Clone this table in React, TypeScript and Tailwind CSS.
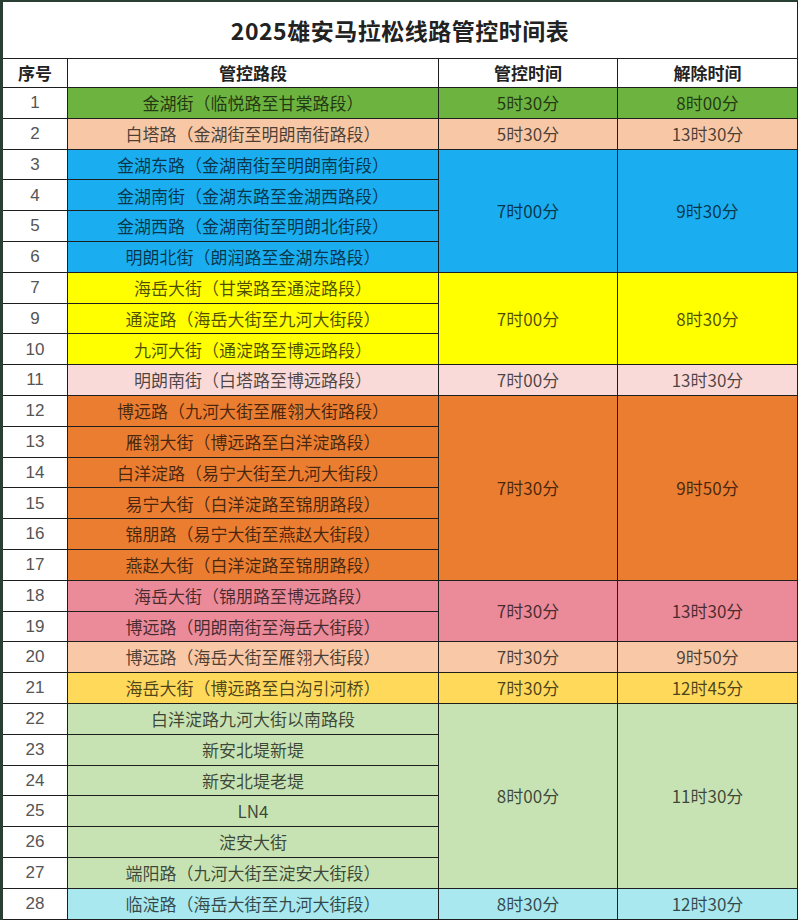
import React from 'react';

type Group = {
  bg: string;
  start: string;
  end: string;
  rows: { no: string; road: string }[];
};

const groups: Group[] = [
  { bg: 'bg-[#6db33f]', start: '5时30分', end: '8时00分', rows: [{ no: '1', road: '金湖街（临悦路至甘棠路段）' }] },
  { bg: 'bg-[#f8c8a6]', start: '5时30分', end: '13时30分', rows: [{ no: '2', road: '白塔路（金湖街至明朗南街路段）' }] },
  {
    bg: 'bg-[#1aaef0]',
    start: '7时00分',
    end: '9时30分',
    rows: [
      { no: '3', road: '金湖东路（金湖南街至明朗南街段）' },
      { no: '4', road: '金湖南街（金湖东路至金湖西路段）' },
      { no: '5', road: '金湖西路（金湖南街至明朗北街段）' },
      { no: '6', road: '明朗北街（朗润路至金湖东路段）' },
    ],
  },
  {
    bg: 'bg-[#ffff00]',
    start: '7时00分',
    end: '8时30分',
    rows: [
      { no: '7', road: '海岳大街（甘棠路至通淀路段）' },
      { no: '9', road: '通淀路（海岳大街至九河大街段）' },
      { no: '10', road: '九河大街（通淀路至博远路段）' },
    ],
  },
  { bg: 'bg-[#f9dad8]', start: '7时00分', end: '13时30分', rows: [{ no: '11', road: '明朗南街（白塔路至博远路段）' }] },
  {
    bg: 'bg-[#eb7d31]',
    start: '7时30分',
    end: '9时50分',
    rows: [
      { no: '12', road: '博远路（九河大街至雁翎大街路段）' },
      { no: '13', road: '雁翎大街（博远路至白洋淀路段）' },
      { no: '14', road: '白洋淀路（易宁大街至九河大街段）' },
      { no: '15', road: '易宁大街（白洋淀路至锦朋路段）' },
      { no: '16', road: '锦朋路（易宁大街至燕赵大街段）' },
      { no: '17', road: '燕赵大街（白洋淀路至锦朋路段）' },
    ],
  },
  {
    bg: 'bg-[#eb8a98]',
    start: '7时30分',
    end: '13时30分',
    rows: [
      { no: '18', road: '海岳大街（锦朋路至博远路段）' },
      { no: '19', road: '博远路（明朗南街至海岳大街段）' },
    ],
  },
  { bg: 'bg-[#f9c8a6]', start: '7时30分', end: '9时50分', rows: [{ no: '20', road: '博远路（海岳大街至雁翎大街段）' }] },
  { bg: 'bg-[#fed95a]', start: '7时30分', end: '12时45分', rows: [{ no: '21', road: '海岳大街（博远路至白沟引河桥）' }] },
  {
    bg: 'bg-[#c7e3b4]',
    start: '8时00分',
    end: '11时30分',
    rows: [
      { no: '22', road: '白洋淀路九河大街以南路段' },
      { no: '23', road: '新安北堤新堤' },
      { no: '24', road: '新安北堤老堤' },
      { no: '25', road: 'LN4' },
      { no: '26', road: '淀安大街' },
      { no: '27', road: '端阳路（九河大街至淀安大街段）' },
    ],
  },
  { bg: 'bg-[#a8e8ee]', start: '8时30分', end: '12时30分', rows: [{ no: '28', road: '临淀路（海岳大街至九河大街段）' }] },
];

// spans must be written out in full for tailwind
const spanClass: Record<number, string> = {
  1: 'row-span-1',
  2: 'row-span-2',
  3: 'row-span-3',
  4: 'row-span-4',
  6: 'row-span-6',
};

const cell = 'flex items-center justify-center border-r border-b border-[#1e1e1e]';

export default function App() {
  return (
    <div className="w-[800px] h-[922px] bg-white font-['Noto_Sans_CJK_SC',sans-serif]">
      <div className="ml-[0px] w-[798px] border-l-[3px] border-t-2 border-[#2a3f33] grid grid-cols-[65px_371px_179px_180px] grid-rows-[57px_29px_repeat(27,30.8px)]">
        {/* title */}
        <div className={`${cell} col-span-4 bg-white`}>
          <h1 className="text-[23px] font-bold text-[#222] tracking-[0.5px]">2025雄安马拉松线路管控时间表</h1>
        </div>

        {/* header */}
        <div className={`${cell} bg-white text-[17px] font-bold text-[#222]`}>序号</div>
        <div className={`${cell} bg-white text-[17px] font-bold text-[#222]`}>管控路段</div>
        <div className={`${cell} bg-white text-[17px] font-bold text-[#222]`}>管控时间</div>
        <div className={`${cell} bg-white text-[17px] font-bold text-[#222]`}>解除时间</div>

        {groups.map((g) =>
          g.rows.map((r, i) => (
            <React.Fragment key={r.no}>
              <div className={`${cell} bg-white text-[17px] text-[#555] font-['Liberation_Sans',sans-serif]`}>{r.no}</div>
              <div className={`${cell} ${g.bg} text-[17px] text-black/70`}>{r.road}</div>
              {i === 0 && (
                <>
                  <div className={`${cell} ${g.bg} ${spanClass[g.rows.length]} text-[17px] text-black/70`}>{g.start}</div>
                  <div className={`${cell} ${g.bg} ${spanClass[g.rows.length]} text-[17px] text-black/70`}>{g.end}</div>
                </>
              )}
            </React.Fragment>
          ))
        )}
      </div>
    </div>
  );
}
